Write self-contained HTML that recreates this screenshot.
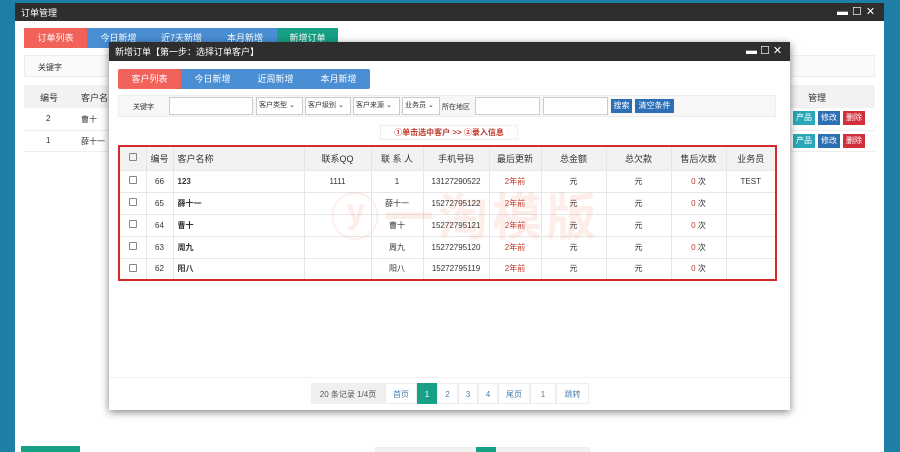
<!DOCTYPE html>
<html><head><meta charset="utf-8"><style>
*{margin:0;padding:0;box-sizing:border-box}
body{width:900px;height:452px;overflow:hidden;background:#1f7ea6;font-family:"Liberation Sans","Noto Sans CJK SC",sans-serif;font-size:9px;color:#333;position:relative}
.a{position:absolute}
.tb{background:#2e2e2e;color:#fff;font-size:9px;padding-left:6px;display:flex;align-items:center}
.tab{position:absolute;color:#fff;text-align:center;font-size:9px}
.btn{position:absolute;color:#fff;font-size:8px;text-align:center;line-height:14px;height:14px}
table{border-collapse:collapse;position:absolute}
td,th{border:1px solid #e6e6e6;text-align:center;font-weight:normal;font-size:8px;padding:0}
th{background:#f2f2f2;font-size:9px}
.cb{display:inline-block;width:8px;height:8px;border:1px solid #888;border-radius:1px}
.red{color:#c0392b}
.inp{position:absolute;background:#fff;border:1px solid #ccc;height:18px}
.sel{position:absolute;background:#fff;border:1px solid #ccc;height:18px;font-size:7px;line-height:16px;padding-left:2px}
.pg{position:absolute;top:383px;height:21px;line-height:21px;text-align:center;border:1px solid #eee;color:#4a7fae;font-size:8px;background:#fff}
</style></head><body>
<div class="a" style="left:15px;top:3px;width:869px;height:449px;background:#fff"></div>
<div class="a tb" style="left:15px;top:3px;width:869px;height:18px">订单管理</div>
<div class="a" style="left:837px;top:6px;color:#fff;font-size:11px;letter-spacing:4px;line-height:12px">▬☐✕</div>
<div class="tab" style="left:24px;top:28px;width:63px;height:20px;line-height:20px;background:#f0625a">订单列表</div>
<div class="tab" style="left:87px;top:28px;width:63px;height:20px;line-height:20px;background:#4a8fd4">今日新增</div>
<div class="tab" style="left:150px;top:28px;width:63px;height:20px;line-height:20px;background:#4a8fd4">近7天新增</div>
<div class="tab" style="left:213px;top:28px;width:64px;height:20px;line-height:20px;background:#4a8fd4">本月新增</div>
<div class="tab" style="left:277px;top:28px;width:61px;height:20px;line-height:20px;background:#17a085">新增订单</div>
<div class="a" style="left:24px;top:55px;width:851px;height:22px;border:1px solid #eee;background:#fafafa"></div>
<div class="a" style="left:38px;top:62px;font-size:8px">关键字</div>
<div class="a" style="left:24px;top:85px;width:851px;height:23px;background:#f2f2f2"></div>
<div class="a" style="left:40px;top:91px">编号</div><div class="a" style="left:81px;top:91px">客户名</div>
<div class="a" style="left:808px;top:91px">管理</div>
<div class="a" style="left:24px;top:108px;width:851px;height:44px;border-bottom:1px solid #eee"></div>
<div class="a" style="left:24px;top:130px;width:851px;border-top:1px solid #eee"></div>
<div class="a" style="left:46px;top:114px;font-size:8px">2</div><div class="a" style="left:81px;top:114px;font-size:8px">曹十</div>
<div class="a" style="left:46px;top:136px;font-size:8px">1</div><div class="a" style="left:81px;top:136px;font-size:8px">薛十一</div>
<div class="btn" style="left:793px;top:111px;width:22px;background:#2ba8b8">产品</div>
<div class="btn" style="left:818px;top:111px;width:22px;background:#2d6fb5">修改</div>
<div class="btn" style="left:843px;top:111px;width:22px;background:#d0303b">删除</div>
<div class="btn" style="left:793px;top:134px;width:22px;background:#2ba8b8">产品</div>
<div class="btn" style="left:818px;top:134px;width:22px;background:#2d6fb5">修改</div>
<div class="btn" style="left:843px;top:134px;width:22px;background:#d0303b">删除</div>
<div class="a" style="left:21px;top:446px;width:59px;height:6px;background:#17a085"></div>
<div class="a" style="left:375px;top:447px;width:215px;height:5px;border:1px solid #eee;background:#f3f3f3"></div>
<div class="a" style="left:476px;top:447px;width:20px;height:5px;background:#17a085"></div>
<div class="a" style="left:109px;top:42px;width:681px;height:368px;background:#fff;box-shadow:0 2px 8px rgba(0,0,0,.5)"></div>
<div class="a tb" style="left:109px;top:42px;width:681px;height:19px">新增订单【第一步：选择订单客户】</div>
<div class="a" style="left:746px;top:45px;color:#fff;font-size:11px;letter-spacing:3px;line-height:12px">▬☐✕</div>
<div class="tab" style="left:118px;top:69px;width:63px;height:20px;line-height:20px;background:#f0625a;border-radius:2px 0 0 2px">客户列表</div>
<div class="tab" style="left:181px;top:69px;width:63px;height:20px;line-height:20px;background:#4a8fd4">今日新增</div>
<div class="tab" style="left:244px;top:69px;width:63px;height:20px;line-height:20px;background:#4a8fd4">近周新增</div>
<div class="tab" style="left:307px;top:69px;width:63px;height:20px;line-height:20px;background:#4a8fd4;border-radius:0 2px 2px 0">本月新增</div>
<div class="a" style="left:118px;top:95px;width:658px;height:22px;border:1px solid #eee;background:#f7f7f7"></div>
<div class="a" style="left:133px;top:102px;font-size:7px">关键字</div>
<div class="inp" style="left:169px;top:97px;width:84px"></div>
<div class="sel" style="left:256px;top:97px;width:47px">客户类型 ⌄</div>
<div class="sel" style="left:305px;top:97px;width:46px">客户级别 ⌄</div>
<div class="sel" style="left:353px;top:97px;width:47px">客户来源 ⌄</div>
<div class="sel" style="left:402px;top:97px;width:38px">业务员 ⌄</div>
<div class="a" style="left:442px;top:102px;font-size:7px">所在地区</div>
<div class="inp" style="left:475px;top:97px;width:65px"></div>
<div class="inp" style="left:543px;top:97px;width:65px"></div>
<div class="btn" style="left:611px;top:99px;width:21px;background:#2d6fb5">搜索</div>
<div class="btn" style="left:635px;top:99px;width:39px;background:#2d6fb5">清空条件</div>
<div class="a red" style="left:380px;top:125px;width:138px;height:15px;border:1px dotted #ddd;font-size:8px;font-weight:bold;line-height:14px;text-align:center">①单击选中客户 &gt;&gt; ②录入信息</div>
<table style="left:118px;top:145px;width:659px;border:2px solid #d42a2a">
<colgroup><col style="width:27px"><col style="width:27px"><col style="width:131px"><col style="width:67px"><col style="width:52px"><col style="width:66px"><col style="width:52px"><col style="width:65px"><col style="width:65px"><col style="width:55px"><col></colgroup>
<tr style="height:24px"><th><span class="cb"></span></th><th>编号</th><th style="text-align:left;padding-left:4px">客户名称</th><th>联系QQ</th><th>联 系 人</th><th>手机号码</th><th>最后更新</th><th>总金额</th><th>总欠款</th><th>售后次数</th><th>业务员</th></tr>
<tr style="height:22px"><td><span class="cb"></span></td><td>66</td><td style="text-align:left;padding-left:4px;font-weight:bold">123</td><td>1111</td><td>1</td><td>13127290522</td><td class="red">2年前</td><td>元</td><td>元</td><td><span class="red">0</span> 次</td><td>TEST</td></tr>
<tr style="height:22px"><td><span class="cb"></span></td><td>65</td><td style="text-align:left;padding-left:4px;font-weight:bold">薛十一</td><td></td><td>薛十一</td><td>15272795122</td><td class="red">2年前</td><td>元</td><td>元</td><td><span class="red">0</span> 次</td><td></td></tr>
<tr style="height:22px"><td><span class="cb"></span></td><td>64</td><td style="text-align:left;padding-left:4px;font-weight:bold">曹十</td><td></td><td>曹十</td><td>15272795121</td><td class="red">2年前</td><td>元</td><td>元</td><td><span class="red">0</span> 次</td><td></td></tr>
<tr style="height:22px"><td><span class="cb"></span></td><td>63</td><td style="text-align:left;padding-left:4px;font-weight:bold">周九</td><td></td><td>周九</td><td>15272795120</td><td class="red">2年前</td><td>元</td><td>元</td><td><span class="red">0</span> 次</td><td></td></tr>
<tr style="height:22px"><td><span class="cb"></span></td><td>62</td><td style="text-align:left;padding-left:4px;font-weight:bold">阳八</td><td></td><td>阳八</td><td>15272795119</td><td class="red">2年前</td><td>元</td><td>元</td><td><span class="red">0</span> 次</td><td></td></tr>
</table>
<div class="a" style="left:330px;top:188px;font-size:50px;line-height:60px;color:rgba(240,120,90,.13);font-weight:bold;letter-spacing:4px;pointer-events:none">ⓨ一淘模版</div>
<div class="a" style="left:109px;top:377px;width:681px;border-top:1px solid #f0f0f0"></div>
<div class="pg" style="left:311px;width:74px;background:#f0f0f0;color:#555">20 条记录 1/4页</div>
<div class="pg" style="left:385px;width:32px">首页</div>
<div class="pg" style="left:417px;width:20px;background:#17a085;color:#fff;border-color:#17a085">1</div>
<div class="pg" style="left:437px;width:21px">2</div>
<div class="pg" style="left:458px;width:20px">3</div>
<div class="pg" style="left:478px;width:20px">4</div>
<div class="pg" style="left:498px;width:32px">尾页</div>
<div class="pg" style="left:530px;width:26px;color:#777">1</div>
<div class="pg" style="left:556px;width:33px">跳转</div>
</body></html>
